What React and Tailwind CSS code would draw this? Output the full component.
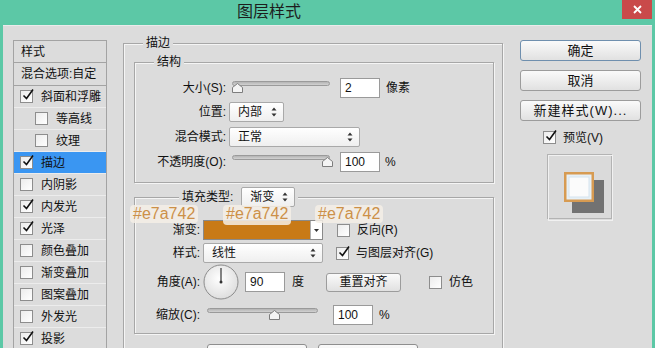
import React from "react";

const Check = ({ checked }) => (
  <span className="relative flex h-[13px] w-[13px] shrink-0 border border-[#8d8d8d] bg-linear-to-br from-[#ececec] to-white">
    {checked && (
      <svg className="absolute -top-[3px] left-[1px] overflow-visible" width="12" height="13" viewBox="0 0 12 13">
        <path d="M1.5 7.5 L4.5 10.5 L11 1.5" fill="none" stroke="#111" strokeWidth="1.6" />
      </svg>
    )}
  </span>
);

const UpDown = () => (
  <svg width="6" height="10" viewBox="0 0 6 10">
    <path d="M3 0.5 L5.5 3.5 H0.5Z M3 9.5 L5.5 6.5 H0.5Z" fill="#333" />
  </svg>
);

const Select = ({ className, text }) => (
  <div className={`flex h-[20px] items-center justify-between rounded-[2px] border border-[#a9a9a9] bg-linear-to-b from-white to-[#efefef] pl-[8px] pr-[6px] ${className}`}>
    <span>{text}</span>
    <UpDown />
  </div>
);

const Input = ({ className, value }) => (
  <div className={`flex h-[20px] w-[40px] items-center border border-[#9a9a9a] bg-white pl-[4px] ${className}`}>
    {value}
  </div>
);

const Slider = ({ className, left }) => (
  <div className={`relative h-[14px] shrink-0 ${className}`}>
    <div className="h-[5px] w-full rounded-full border border-[#9a9a9a] bg-linear-to-b from-[#b4b4b4] to-[#d2d2d2]" />
    <svg className="absolute top-[2px]" style={{ left }} width="11" height="10" viewBox="0 0 11 10">
      <path d="M0.5 9.5 V4.5 L5.5 0.5 L10.5 4.5 V9.5 Z" fill="#f4f4f4" stroke="#7d7d7d" />
    </svg>
  </div>
);

const Btn = ({ className, children }) => (
  <div className={`flex items-center justify-center rounded-[3px] border bg-linear-to-b from-[#fafafa] to-[#e1e1e1] ${className}`}>
    {children}
  </div>
);

const Legend = ({ className, children }) => (
  <div className={`flex w-fit items-center bg-[#dcdcdc] px-[3px] ${className}`}>{children}</div>
);

const box = "border border-[#a7a7a7] shadow-[inset_1px_1px_0_#f5f5f5,1px_1px_0_#f5f5f5]";

const styles = [
  { name: "斜面和浮雕", checked: true },
  { name: "等高线", sub: true },
  { name: "纹理", sub: true },
  { name: "描边", checked: true, active: true },
  { name: "内阴影" },
  { name: "内发光", checked: true },
  { name: "光泽", checked: true },
  { name: "颜色叠加" },
  { name: "渐变叠加" },
  { name: "图案叠加" },
  { name: "外发光" },
  { name: "投影", checked: true },
];

const HexTag = ({ className }) => (
  <div className={`absolute h-[18px] rounded-[4px] bg-[#f4eee6]/85 px-[3px] text-[16px] leading-[18px] text-[#cc9048] ${className}`}>
    #e7a742
  </div>
);

export default function App() {
  return (
    <div className="relative flex h-[348px] w-[655px] flex-col overflow-hidden bg-[#5cc8a6] font-['Liberation_Sans','Noto_Sans_CJK_SC',sans-serif] text-[12px] text-[#111]">
      {/* title bar */}
      <div className="flex h-[25px] shrink-0 items-start">
        <span className="ml-[237px] mt-[2px] text-[16px] leading-[20px] text-[#1d1d1d]">图层样式</span>
        <div className="ml-auto mr-[3px] flex h-[19px] w-[30px] items-center justify-center bg-[#c94a4a]">
          <svg width="9" height="9" viewBox="0 0 9 9">
            <path d="M1 1 L8 8 M8 1 L1 8" stroke="#fff" strokeWidth="1.8" />
          </svg>
        </div>
      </div>

      <div className="mx-[3px] flex flex-1 items-start border-t border-[#ebebeb] bg-[#dcdcdc]">
        {/* style list */}
        <div className="ml-[10px] mt-[14px] h-[330px] w-[94px] shrink-0 border border-[#a3a3a3]">
          <div className="flex h-[22px] items-center border-b border-[#a3a3a3] pl-[7px]">样式</div>
          <div className="flex h-[23px] items-center border-b border-[#a3a3a3] pl-[7px]">混合选项:自定</div>
          {styles.map((s) => (
            <div
              key={s.name}
              className={`flex h-[22px] items-center gap-[8px] border-b border-[#ececec] ${s.sub ? "pl-[21px]" : "pl-[6px]"} ${s.active ? "bg-[#3a96f2]" : ""}`}
            >
              <Check checked={s.checked} />
              <span>{s.name}</span>
            </div>
          ))}
        </div>

        {/* stroke settings */}
        <div className={`ml-[16px] mt-[17px] h-[340px] w-[380px] shrink-0 pl-[10px] ${box}`}>
          <Legend className="-mt-[9px] ml-[9px] h-[16px]">描边</Legend>

          <div className={`mt-[11px] w-[360px] pb-[10px] ${box}`}>
            <Legend className="-mt-[9px] ml-[19px] h-[16px]">结构</Legend>
            <div className="mt-[8px] flex h-[20px] items-center">
              <span className="w-[91px] text-right">大小(S):</span>
              <Slider className="ml-[6px] w-[98px]" left={0} />
              <Input className="ml-[10px]" value="2" />
              <span className="ml-[6px]">像素</span>
            </div>
            <div className="mt-[4px] flex h-[20px] items-center">
              <span className="w-[91px] text-right">位置:</span>
              <Select className="ml-[3px] w-[55px]" text="内部" />
            </div>
            <div className="mt-[5px] flex h-[20px] items-center">
              <span className="w-[91px] text-right">混合模式:</span>
              <Select className="ml-[3px] w-[131px]" text="正常" />
            </div>
            <div className="mt-[5px] flex h-[20px] items-center">
              <span className="w-[91px] text-right">不透明度(O):</span>
              <Slider className="ml-[6px] w-[98px]" left={90} />
              <Input className="ml-[10px]" value="100" />
              <span className="ml-[5px]">%</span>
            </div>
          </div>

          <div className={`mt-[14px] w-[360px] pb-[8px] ${box}`}>
            <Legend className="-mt-[11px] ml-[44px] h-[20px]">
              <span>填充类型:</span>
              <Select className="ml-[8px] w-[54px]" text="渐变" />
            </Legend>
            <div className="mt-[13px] flex h-[20px] items-center">
              <span className="w-[65px] text-right">渐变:</span>
              <div className="ml-[3px] flex h-[20px] border border-[#8a8a8a]">
                <div className="w-[106px] bg-[#c87a17]" />
                <div className="flex w-[12px] items-center justify-center border-l border-[#b0b0b0] bg-white">
                  <svg width="5" height="3" viewBox="0 0 5 3">
                    <path d="M0 0 H5 L2.5 3Z" fill="#333" />
                  </svg>
                </div>
              </div>
              <span className="ml-[14px]"><Check /></span>
              <span className="ml-[7px]">反向(R)</span>
            </div>
            <div className="mt-[3px] flex h-[20px] items-center">
              <span className="w-[65px] text-right">样式:</span>
              <Select className="ml-[3px] w-[120px]" text="线性" />
              <span className="ml-[13px]"><Check checked /></span>
              <span className="ml-[7px]">与图层对齐(G)</span>
            </div>
            <div className="mt-[1px] flex h-[36px] items-center">
              <span className="w-[65px] text-right">角度(A):</span>
              <svg className="ml-[3px]" width="36" height="36" viewBox="0 0 36 36">
                <defs>
                  <radialGradient id="dial" cx="45%" cy="40%" r="60%">
                    <stop offset="0%" stopColor="#ffffff" />
                    <stop offset="100%" stopColor="#dedede" />
                  </radialGradient>
                </defs>
                <circle cx="18" cy="18" r="17" fill="url(#dial)" stroke="#8c8c8c" />
                <line x1="18" y1="18" x2="18" y2="4" stroke="#333" strokeWidth="1.2" />
                <circle cx="18" cy="18" r="1.5" fill="#333" />
              </svg>
              <Input className="ml-[6px]" value="90" />
              <span className="ml-[7px]">度</span>
              <Btn className="ml-[22px] h-[19px] w-[75px] border-[#9c9c9c]">重置对齐</Btn>
              <span className="ml-[28px]"><Check /></span>
              <span className="ml-[7px]">仿色</span>
            </div>
            <div className="mt-[5px] flex h-[20px] items-center">
              <span className="w-[65px] text-right">缩放(C):</span>
              <Slider className="ml-[7px] w-[111px]" left={62} />
              <Input className="ml-[15px]" value="100" />
              <span className="ml-[6px]">%</span>
            </div>
          </div>

          <div className="mt-[10px] flex gap-[11px] pl-[73px]">
            <Btn className="h-[23px] w-[100px] border-[#8e8e8e]">设置为默认值</Btn>
            <Btn className="h-[23px] w-[100px] border-[#8e8e8e]">复位为默认值</Btn>
          </div>
        </div>

        {/* buttons and preview */}
        <div className="ml-[17px] mt-[14px] flex w-[121px] shrink-0 flex-col">
          <Btn className="h-[21px] border-[#6f8fae] text-[13px]">确定</Btn>
          <Btn className="mt-[9px] h-[21px] border-[#9c9c9c] text-[13px]">取消</Btn>
          <Btn className="mt-[9px] h-[21px] border-[#9c9c9c] text-[13px] tracking-[1px]">新建样式(W)...</Btn>
          <div className="mt-[10px] flex h-[13px] items-center pl-[23px]">
            <Check checked />
            <span className="ml-[7px]">预览(V)</span>
          </div>
          <svg className="ml-[27px] mt-[10px]" width="66" height="67" viewBox="0 0 66 67">
            <rect x="0.5" y="0.5" width="64" height="64" fill="#dadada" stroke="#b3b3b3" />
            <rect x="1.5" y="1.5" width="64" height="65" fill="none" stroke="#f1f1f1" />
            <rect x="25" y="26" width="32" height="33" fill="#727272" />
            <rect x="17" y="18" width="30" height="30" fill="#d79b52" />
            <rect x="19.5" y="20.5" width="25" height="25" fill="#e7f0f6" />
            <rect x="22" y="23" width="20" height="20" fill="#fbfbfb" stroke="#d5e3ee" />
          </svg>
        </div>
      </div>

      <HexTag className="left-[130px] top-[205px]" />
      <HexTag className="left-[223px] top-[205px] h-[20px]" />
      <HexTag className="left-[315px] top-[205px]" />
    </div>
  );
}
